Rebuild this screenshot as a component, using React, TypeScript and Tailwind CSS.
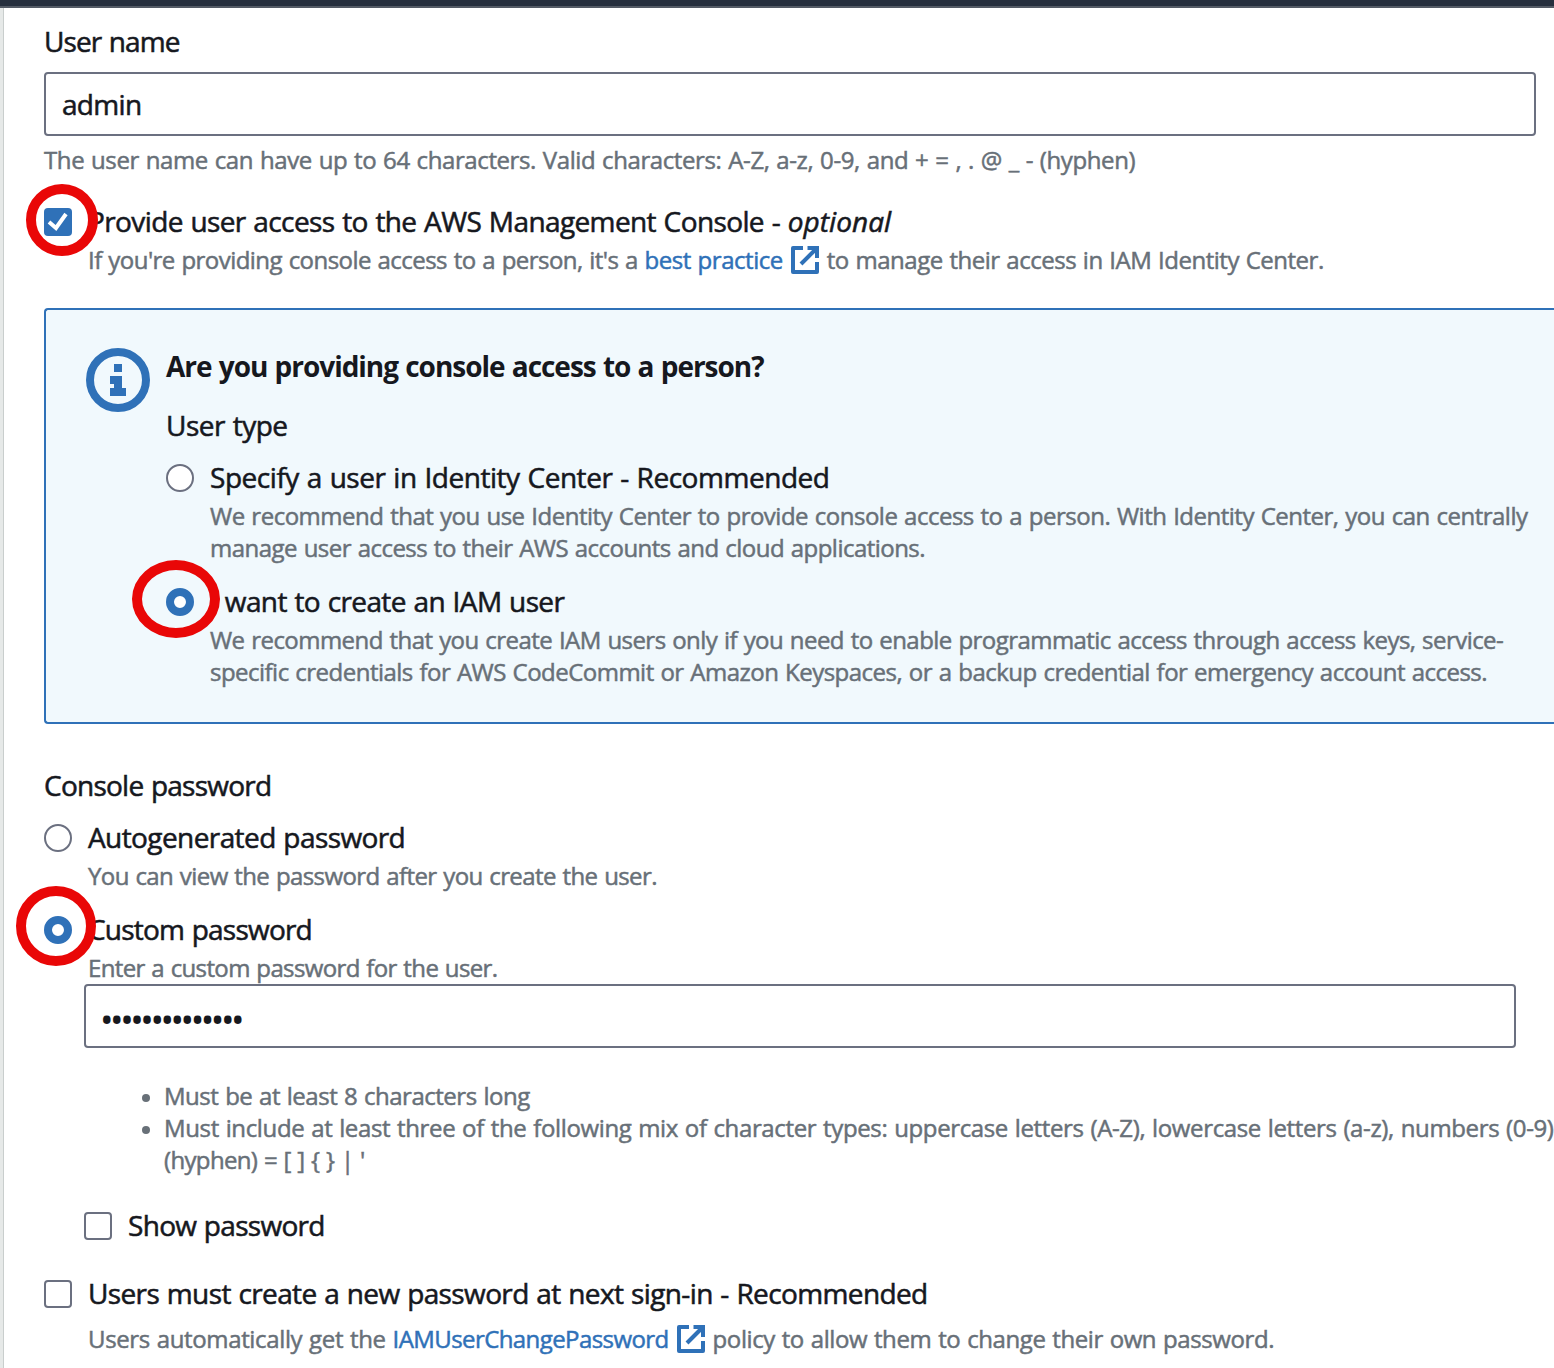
import type { ReactNode } from "react";

const label =
  "h-11 text-[28px] leading-[45px] text-[#16181e] whitespace-pre [word-spacing:1px] [-webkit-text-stroke:0.55px]";
const hint =
  "h-8 text-2xl leading-8 text-[#687078] whitespace-pre [word-spacing:1px] [-webkit-text-stroke:0.5px]";

function Checkbox({ checked = false }: { checked?: boolean }) {
  if (!checked) {
    return <span className="block size-7 rounded-[4px] border-2 border-[#6b7080] bg-white" />;
  }
  return (
    <span className="block size-7 rounded-[4px] bg-[#2f71b8]">
      <svg viewBox="0 0 14 14" className="size-7" fill="none" stroke="#fff" strokeWidth="2">
        <polyline points="2.5,7 6,10 11,3" />
      </svg>
    </span>
  );
}

function Radio({ checked = false }: { checked?: boolean }) {
  return checked ? (
    <span className="block size-7 rounded-full border-8 border-[#2f71b8] bg-white" />
  ) : (
    <span className="block size-7 rounded-full border-2 border-[#6b7080] bg-white" />
  );
}

function ExternalIcon() {
  return (
    <svg viewBox="0 0 28 28" className="mx-2 size-7 shrink-0" fill="none" stroke="#2f71b8" strokeWidth="4">
      <path d="M12 2H2v24h24V16" strokeLinejoin="round" />
      <path d="M16.5 2H26v10" />
      <path d="M10 18 26 2" />
    </svg>
  );
}

function InfoIcon() {
  return (
    <svg viewBox="0 0 64 64" className="mt-[5px] size-16 shrink-0" fill="#2f71b8">
      <circle cx="32" cy="32" r="28" fill="none" stroke="#2f71b8" strokeWidth="8" />
      <path d="M28 16h8v8h-8zM24 28h12v12h4v8H24v-8h4v-4h-4z" />
    </svg>
  );
}

function Option({ control, ring, children }: { control: ReactNode; ring?: string; children: ReactNode }) {
  return (
    <div className="flex gap-4">
      <div className="relative mt-[9px] h-7 w-7 shrink-0">
        {control}
        {ring && <span className={`absolute z-10 rounded-[50%] border-10 border-[#e90707] ${ring}`} />}
      </div>
      <div>{children}</div>
    </div>
  );
}

function Bullet({ children }: { children: ReactNode }) {
  return (
    <li className="flex gap-3.5">
      <span className="mt-3.5 size-2 shrink-0 rounded-full bg-[#687078]" />
      <div>{children}</div>
    </li>
  );
}

export default function App() {
  return (
    <div className="h-[1368px] w-[1554px] overflow-hidden bg-white font-['Open_Sans',sans-serif]">
      <div className="h-2 border-b-2 border-[#545b66] bg-[#262f3e]" />
      <div className="flex h-[1360px]">
        <div className="w-1 shrink-0 border-r border-[#c9cecd] bg-[#e6e9e8]" />
        <main className="flex w-[1550px] shrink-0 flex-col pt-[11px] pl-10">
          <div className={`${label} tracking-[-0.9px]`}>User name</div>
          <div className="mt-[9px] flex h-16 w-[1492px] items-center rounded-[4px] border-2 border-[#6b7080] px-4">
            <span className={`${label} tracking-[-0.7px]`}>admin</span>
          </div>
          <div className={`${hint} mt-2 tracking-[-0.4px]`}>
            The user name can have up to 64 characters. Valid characters: A-Z, a-z, 0-9, and + = , . @ _ - (hyphen)
          </div>

          <div className="mt-[23px]">
            <Option control={<Checkbox checked />} ring="-top-6 -left-[18px] size-[72px]">
              <div className={`${label} tracking-[-0.61px]`}>
                Provide user access to the AWS Management Console - <em className="tracking-[0.05px]">optional</em>
              </div>
              <div className={`${hint} mt-px flex items-center`}>
                <span className="tracking-[-0.55px]">If you're providing console access to a person, it's a </span>
                <a className="tracking-[-0.47px] text-[#2f71b8]">best practice</a>
                <ExternalIcon />
                <span className="tracking-[-0.49px]">to manage their access in IAM Identity Center.</span>
              </div>
            </Option>
          </div>

          <section className="mt-8 flex h-[416px] gap-4 rounded-l-[4px] border-2 border-r-0 border-[#2f71b8] bg-[#f1f9fd] pt-[33px] pl-10">
            <InfoIcon />
            <div>
              <h2 className="h-11 text-[28px] leading-[46px] font-bold tracking-[-1.03px] whitespace-pre text-[#16181e] [word-spacing:1px]">
                Are you providing console access to a person?
              </h2>
              <div className={`${label} mt-4 tracking-[-0.5px]`}>User type</div>
              <div className="mt-2">
                <Option control={<Radio />}>
                  <div className={`${label} tracking-[-0.46px]`}>Specify a user in Identity Center - Recommended</div>
                  <div className={`${hint} mt-px tracking-[-0.5px]`}>
                    We recommend that you use Identity Center to provide console access to a person. With Identity Center, you can centrally
                  </div>
                  <div className={`${hint} tracking-[-0.53px]`}>manage user access to their AWS accounts and cloud applications.</div>
                </Option>
              </div>
              <div className="mt-[15px]">
                <Option control={<Radio checked />} ring="-top-[28px] -left-[34px] h-[78px] w-[88px]">
                  <div className={`${label} tracking-[-0.62px]`}>I want to create an IAM user</div>
                  <div className={`${hint} mt-px tracking-[-0.55px]`}>
                    We recommend that you create IAM users only if you need to enable programmatic access through access keys, service-
                  </div>
                  <div className={`${hint} tracking-[-0.52px]`}>
                    specific credentials for AWS CodeCommit or Amazon Keyspaces, or a backup credential for emergency account access.
                  </div>
                </Option>
              </div>
            </div>
          </section>

          <div className={`${label} mt-[39px] tracking-[-0.75px]`}>Console password</div>
          <div className="mt-2">
            <Option control={<Radio />}>
              <div className={`${label} tracking-[-0.59px]`}>Autogenerated password</div>
              <div className={`${hint} mt-px tracking-[-0.59px]`}>You can view the password after you create the user.</div>
            </Option>
          </div>
          <div className="mt-[15px]">
            <Option control={<Radio checked />} ring="-top-[30px] -left-7 size-20">
              <div className={`${label} tracking-[-0.78px]`}>Custom password</div>
              <div className={`${hint} mt-px tracking-[-0.63px]`}>Enter a custom password for the user.</div>
            </Option>
          </div>

          <div className="flex flex-col pl-10">
            <div className="flex h-16 w-[1432px] items-center rounded-[4px] border-2 border-[#6b7080] px-4">
              <span className="mt-2 -ml-0.5 text-4xl leading-[44px] tracking-[-3.46px] text-[#16181e]">••••••••••••••</span>
            </div>
            <ul className="mt-8 pl-[58px]">
              <Bullet>
                <div className={`${hint} tracking-[-0.48px]`}>Must be at least 8 characters long</div>
              </Bullet>
              <Bullet>
                <div className={`${hint} tracking-[-0.37px]`}>
                  Must include at least three of the following mix of character types: uppercase letters (A-Z), lowercase letters (a-z), numbers (0-9)
                </div>
                <div className={`${hint} tracking-[-0.65px]`}>{"(hyphen) = [ ] { } | '"}</div>
              </Bullet>
            </ul>
            <div className="mt-[27px]">
              <Option control={<Checkbox />}>
                <div className={`${label} tracking-[-0.7px]`}>Show password</div>
              </Option>
            </div>
          </div>

          <div className="mt-6">
            <Option control={<Checkbox />}>
              <div className={`${label} tracking-[-0.62px]`}>Users must create a new password at next sign-in - Recommended</div>
              <div className={`${hint} mt-2 flex items-center`}>
                <span className="tracking-[-0.36px]">Users automatically get the </span>
                <a className="tracking-[-0.58px] text-[#2f71b8]">IAMUserChangePassword</a>
                <ExternalIcon />
                <span className="tracking-[-0.41px]">policy to allow them to change their own password.</span>
              </div>
            </Option>
          </div>
        </main>
      </div>
    </div>
  );
}
